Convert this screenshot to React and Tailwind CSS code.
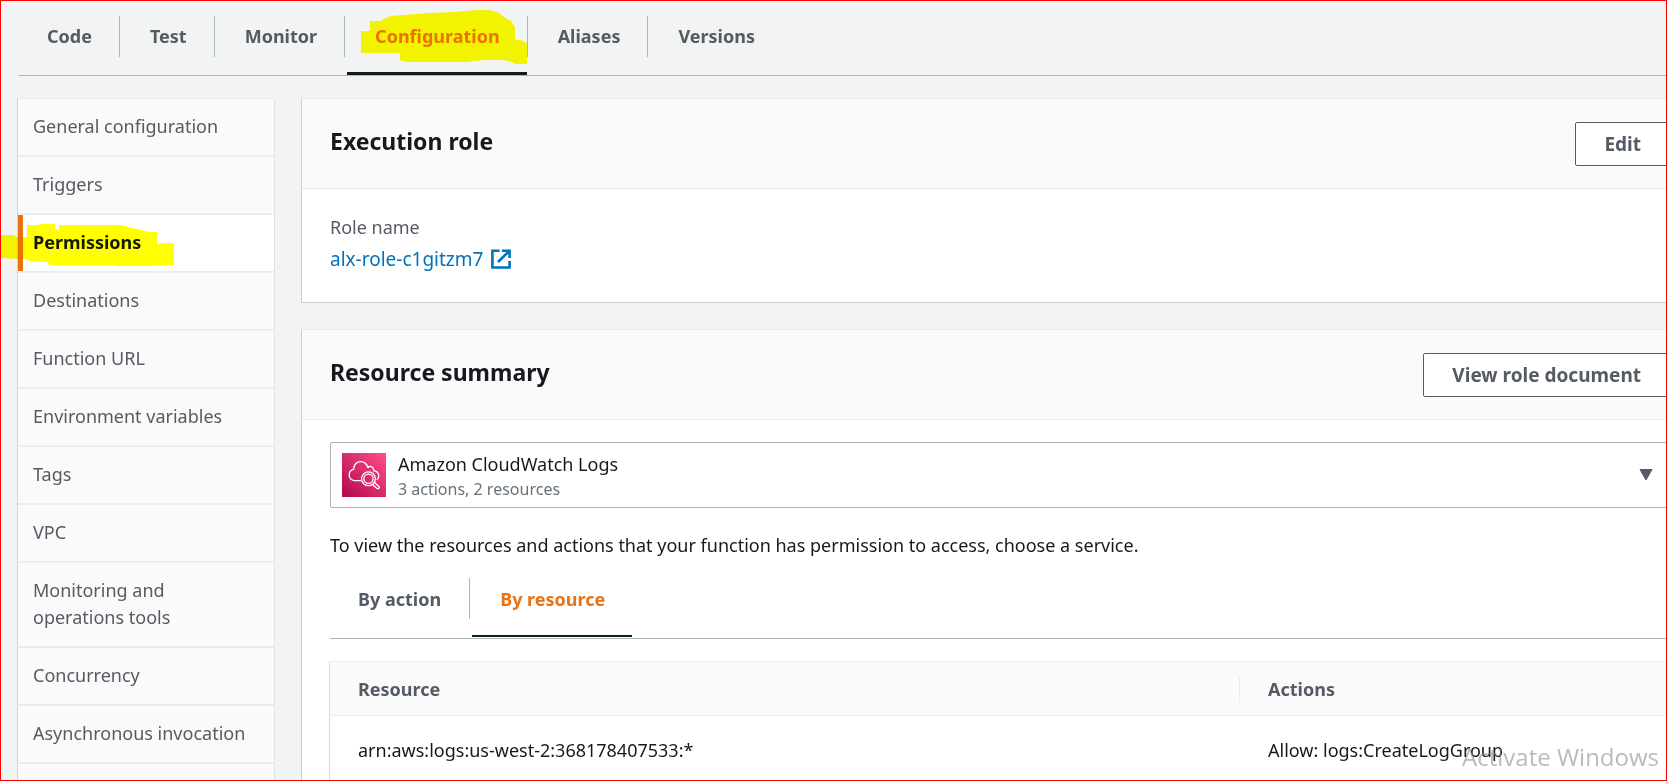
const TABS = ["Code", "Test", "Monitor", "Configuration", "Aliases", "Versions"];

const SIDE_ITEMS = [
  "General configuration",
  "Triggers",
  "Permissions",
  "Destinations",
  "Function URL",
  "Environment variables",
  "Tags",
  "VPC",
  "Monitoring and operations tools",
  "Concurrency",
  "Asynchronous invocation",
];

function TopTabs() {
  return (
    <nav aria-label="Function" className="flex border-b border-[#aab7b8] pl-px pt-4">
      {TABS.map((tab, i) => {
        const active = tab === "Configuration";
        return (
          <div key={tab} className="relative mr-0.5 flex h-[59px] flex-col">
            <a
              href={"#" + tab.toLowerCase()}
              aria-current={active ? "page" : undefined}
              className={
                "flex h-[41px] items-center pb-0.5 pl-7 pr-[27px] text-lg font-bold leading-6 " +
                (i < TABS.length - 1 ? "border-r border-[#aab7b8] " : "") +
                (active ? "text-[#ec7211]" : "text-[#545b64]")
              }
            >
              {tab}
            </a>
            {active && <div className="mr-px mt-auto h-[3px] bg-[#16191f]" />}
            {active && (
              <svg
                aria-hidden="true"
                viewBox="362 10 166 54"
                className="pointer-events-none absolute -top-1.5 left-3.5 h-[54px] w-[166px] mix-blend-multiply"
              >
                <path
                  fill="#ff0"
                  d="M362 31H371V21H381L387 18L392 16L404 15L417 14L430 13L457 12L478 10H491L500 13L506 18L512 21L516 27V40H522L528 43V64H517L510 61L503 60H487L473 61L470 62H408L404 61L401 60V53H362Z"
                />
              </svg>
            )}
          </div>
        );
      })}
    </nav>
  );
}

function SideNav() {
  return (
    <nav
      aria-label="Configuration"
      className="w-[258px] shrink-0 border-x border-t border-l-[#d0d4d4] border-r-[#dfe3e3] border-t-[#eaeded] bg-[#fafafa]"
    >
      <ul>
        {SIDE_ITEMS.map((item) => {
          const active = item === "Permissions";
          return (
            <li key={item} className="relative border-b-2 border-[#eaeded]">
              <a
                href={"#" + item.toLowerCase().replaceAll(" ", "-")}
                aria-current={active ? "true" : undefined}
                className={
                  "block pb-[15px] pt-3.5 text-lg leading-[27px] " +
                  (active
                    ? "border-l-[5px] border-[#ec7211] bg-white pl-2.5 font-bold text-[#16191f]"
                    : "pl-[15px] text-[#545b64]") +
                  (item === "Asynchronous invocation" ? " pr-4" : " pr-8")
                }
              >
                {item}
              </a>
              {active && (
                <svg
                  aria-hidden="true"
                  viewBox="1 224 173 42"
                  className="pointer-events-none absolute -left-[17px] top-[9px] h-[42px] w-[173px] mix-blend-multiply"
                >
                  <path
                    fill="#ff0"
                    d="M1 235H13L17 237H27V225H39V224H55V229L59 230V225H121L128 227L138 229L149 232H157V244L165 243H174V265H151V266H115V265H50L47 262L29 261L28 260L23 259H18L1 258Z"
                  />
                </svg>
              )}
            </li>
          );
        })}
      </ul>
    </nav>
  );
}

function Panel({ title, action, children }) {
  return (
    <section className="border border-b-[#c9cdcd] border-l-[#c9cdcd] border-r-[#d5dbdb] border-t-[#eaeded] bg-white">
      <header className="flex h-[90px] items-start justify-between border-b border-[#eaeded] bg-[#fafafa] px-7 pt-[23px]">
        <h2 className="text-[23px] font-bold leading-[38px] text-[#16191f]">{title}</h2>
        <button
          type="button"
          className="h-11 rounded-xs border border-[#545b64] bg-white px-7 text-[19px] font-bold text-[#545b64]"
        >
          {action}
        </button>
      </header>
      {children}
    </section>
  );
}

function ExternalIcon() {
  return (
    <svg viewBox="0 0 20 20" className="size-5" fill="none" stroke="#0073bb" strokeWidth="2.6" aria-hidden="true">
      <path d="M8.5 1.7H1.4V18.5H18.6V12M11 1.7H18.6V9M18 2.2L7 13" />
    </svg>
  );
}

function CloudWatchIcon() {
  return (
    <svg viewBox="0 0 44 44" className="size-11 shrink-0" aria-hidden="true">
      <defs>
        <linearGradient id="cw" x1="0" y1="1" x2="1" y2="0">
          <stop offset="0" stopColor="#b0084d" />
          <stop offset="1" stopColor="#ff4f8b" />
        </linearGradient>
      </defs>
      <rect width="44" height="44" fill="url(#cw)" />
      <g fill="none" stroke="#fff" strokeWidth="1.3" strokeLinejoin="round" strokeLinecap="round">
        <path d="M18.5 27.6H12.6C9.4 27.2 7.2 25 7.2 22C7.2 19 9 17 11.7 16.2C11.6 11.8 14.6 8.6 18.8 8.6C22.3 8.6 24.6 10.6 26 14.6C27.8 12.4 31.6 13.4 31.8 17.6C35.2 18.4 36.8 20.4 36.8 22.7C36.8 24.3 36.3 25.5 35.2 26.3" />
        <circle cx="26.5" cy="25.8" r="6.9" />
        <circle cx="26.5" cy="25.8" r="4.6" />
        <path d="M32.4 29.4L37 33.4C38 34.6 36.4 36.4 35 35.4L30.4 31.4" />
      </g>
    </svg>
  );
}

function ResourceTable() {
  return (
    <table className="-ml-px mt-[22px] w-full table-fixed border border-[#eaeded] border-l-[#d5dbdb] text-left text-lg">
      <thead className="bg-[#fafafa] text-[#545b64]">
        <tr className="h-[54px] border-b border-[#eaeded]">
          <th scope="col" className="w-[68%] p-0 font-bold">
            <div className="flex h-[26px] items-center border-r border-[#eaeded] pl-7">Resource</div>
          </th>
          <th scope="col" className="p-0 pl-7 font-bold">Actions</th>
        </tr>
      </thead>
      <tbody>
        <tr className="h-[68px] text-[#16191f]">
          <td className="p-0 pl-7">arn:aws:logs:us-west-2:368178407533:*</td>
          <td className="p-0 pl-7">Allow: logs:CreateLogGroup</td>
        </tr>
      </tbody>
    </table>
  );
}

export default function App() {
  return (
    <div className="relative h-screen overflow-hidden bg-[#f2f3f3] font-['Noto_Sans',sans-serif] text-[#16191f]">
      <div className="-mr-8 pl-[18px]">
        <TopTabs />
        <div className="-ml-px mt-[22px] flex gap-[26px]">
          <SideNav />
          <main className="flex min-w-0 flex-1 flex-col gap-[26px]">
            <Panel title="Execution role" action="Edit">
              <dl className="px-7 pb-[26px] pt-[23px] text-lg">
                <dt className="leading-[30px] text-[#545b64]">Role name</dt>
                <dd className="text-[19px] leading-[34px]">
                  <a href="#role" className="flex items-center gap-2 text-[#0073bb]">
                    alx-role-c1gitzm7
                    <ExternalIcon />
                  </a>
                </dd>
              </dl>
            </Panel>
            <Panel title="Resource summary" action="View role document">
              <div className="px-7 pb-8 pt-[22px]">
                <button
                  type="button"
                  aria-haspopup="listbox"
                  className="flex h-[66px] w-full items-center gap-3 rounded-xs border border-[#aab7b8] bg-white pl-[11px] pr-4 text-left"
                >
                  <CloudWatchIcon />
                  <span className="flex-1 pt-1">
                    <span className="block text-lg leading-6">Amazon CloudWatch Logs</span>
                    <span className="block text-base leading-[26px] text-[#687078]">3 actions, 2 resources</span>
                  </span>
                  <svg viewBox="0 0 14 12" className="h-3 w-3.5" aria-hidden="true">
                    <path d="M1 .5H13L7 11Z" fill="#545b64" stroke="#545b64" strokeLinejoin="round" />
                  </svg>
                </button>
                <p className="mt-[23px] text-lg leading-7">
                  To view the resources and actions that your function has permission to access, choose a service.
                </p>
                <div role="tablist" aria-label="Group by" className="mt-[19px] flex border-b border-[#aab7b8]">
                  <div className="mr-0.5 h-[60px]">
                    <button
                      type="button"
                      role="tab"
                      aria-selected="false"
                      className="h-[41px] border-r border-[#aab7b8] px-7 text-lg font-bold text-[#545b64]"
                    >
                      By action
                    </button>
                  </div>
                  <div className="flex h-[60px] flex-col">
                    <button
                      type="button"
                      role="tab"
                      aria-selected="true"
                      className="h-[41px] pl-7 pr-[27px] text-lg font-bold text-[#ec7211]"
                    >
                      By resource
                    </button>
                    <div className="mb-px mt-auto h-0.5 bg-[#16191f]" />
                  </div>
                </div>
                <ResourceTable />
              </div>
            </Panel>
          </main>
        </div>
      </div>
      <div className="pointer-events-none absolute bottom-2 right-2 font-['Open_Sans',sans-serif] text-2xl text-[#8c8c8c]/60">
        Activate Windows
      </div>
      <div className="pointer-events-none absolute inset-0 border border-[#ff0000]" />
    </div>
  );
}
